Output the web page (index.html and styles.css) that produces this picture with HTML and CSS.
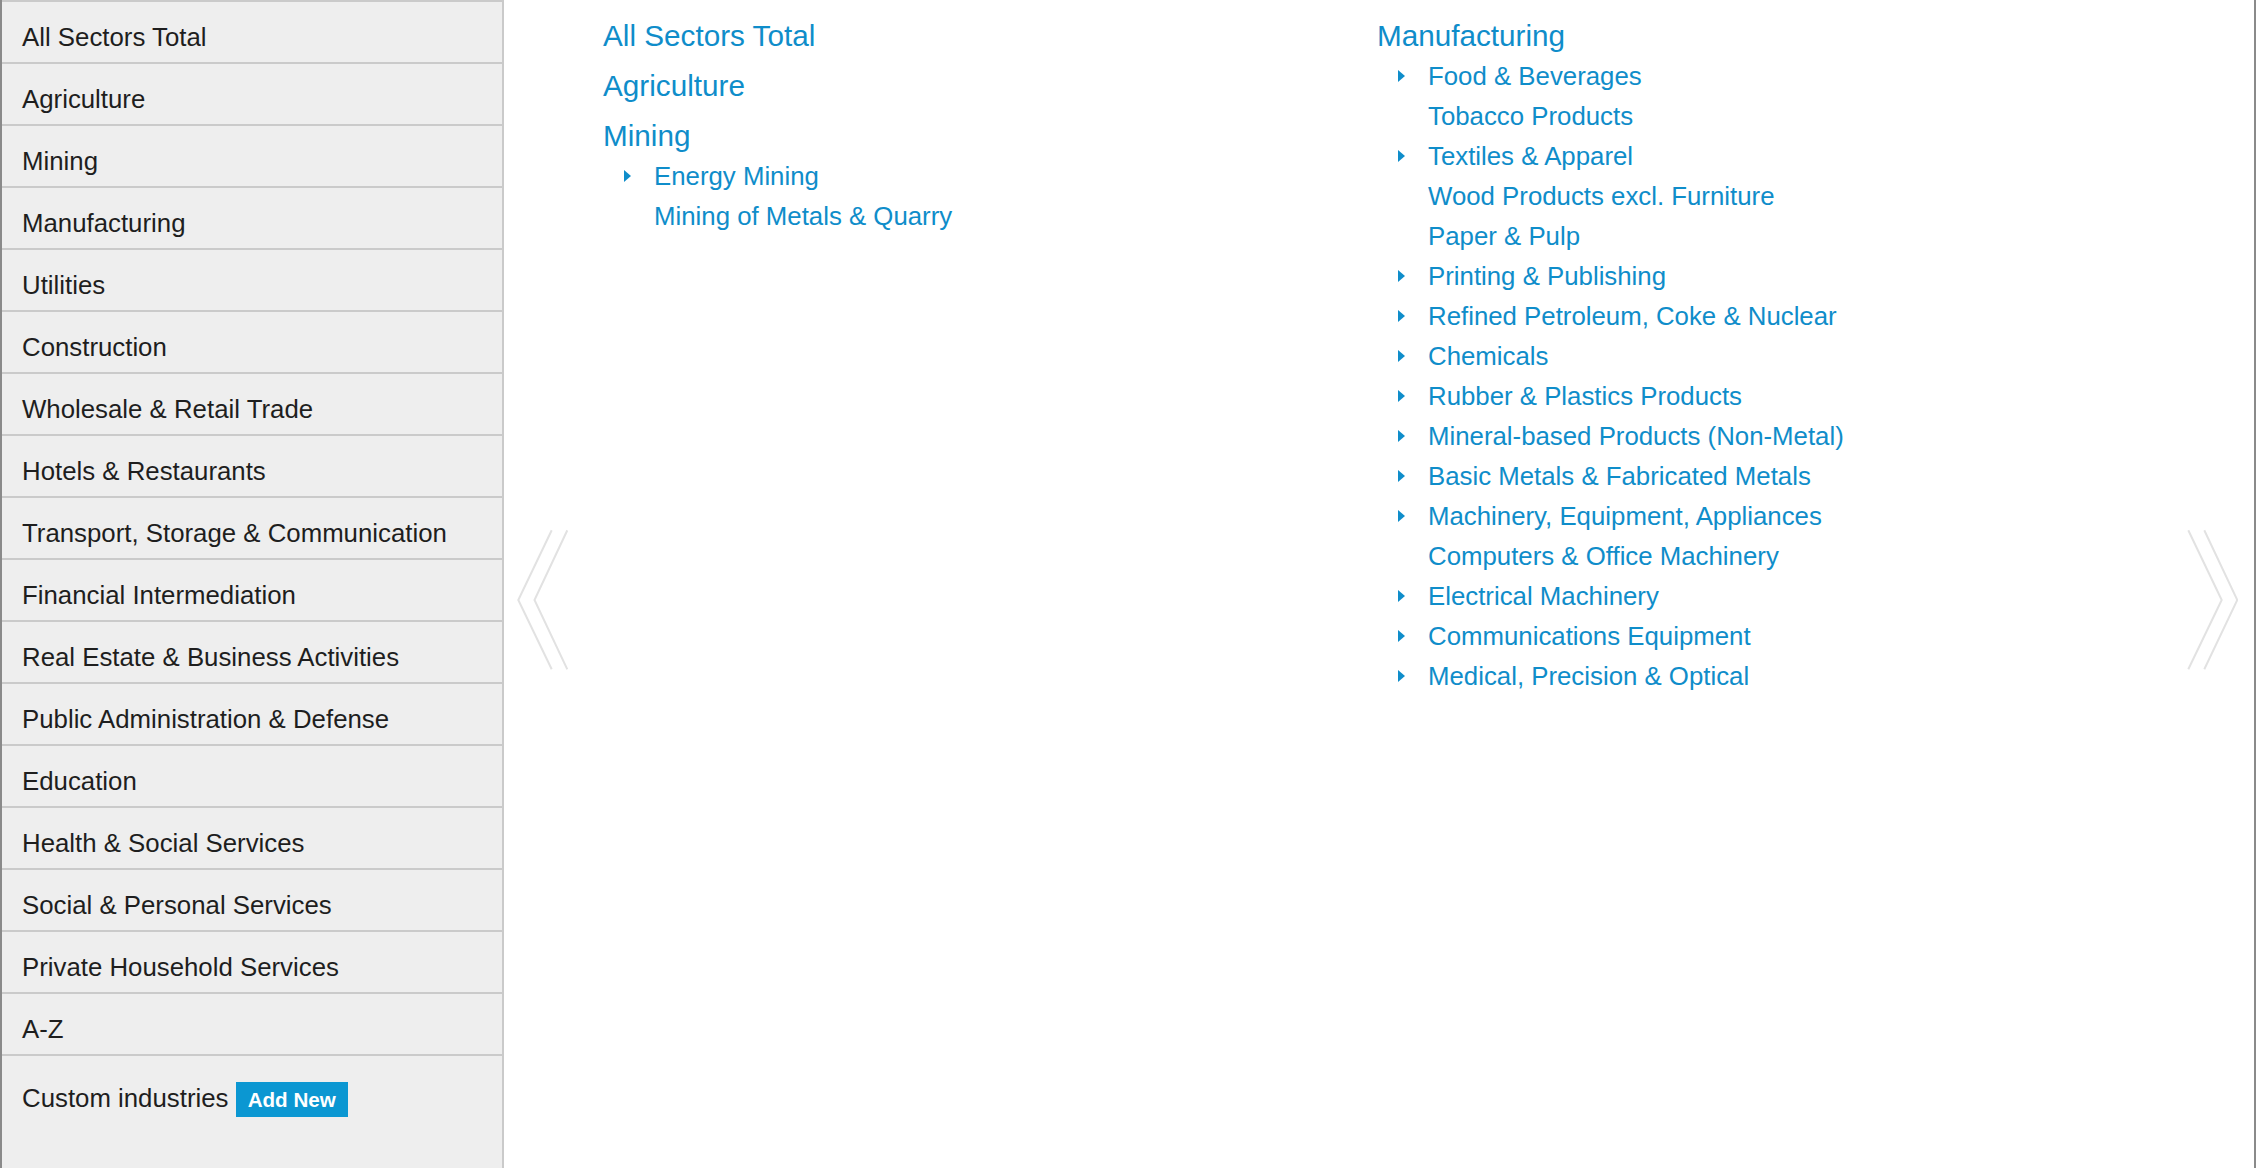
FILE: index.html
```html
<!DOCTYPE html>
<html lang="en">
<head>
<meta charset="utf-8">
<title>Industries</title>
<link rel="stylesheet" href="styles.css">
</head>
<body>
<aside class="sidebar">
  <ul class="side-list">
    <li class="side-item">All Sectors Total</li>
    <li class="side-item">Agriculture</li>
    <li class="side-item">Mining</li>
    <li class="side-item">Manufacturing</li>
    <li class="side-item">Utilities</li>
    <li class="side-item">Construction</li>
    <li class="side-item">Wholesale &amp; Retail Trade</li>
    <li class="side-item">Hotels &amp; Restaurants</li>
    <li class="side-item">Transport, Storage &amp; Communication</li>
    <li class="side-item">Financial Intermediation</li>
    <li class="side-item">Real Estate &amp; Business Activities</li>
    <li class="side-item">Public Administration &amp; Defense</li>
    <li class="side-item">Education</li>
    <li class="side-item">Health &amp; Social Services</li>
    <li class="side-item">Social &amp; Personal Services</li>
    <li class="side-item">Private Household Services</li>
    <li class="side-item">A-Z</li>
    <li class="side-item side-custom">Custom industries <span class="add-btn">Add New</span></li>
  </ul>
</aside>
<main class="main">
  <div class="nav-arrow">
    <svg width="52" height="142" viewBox="0 0 52 142"><polyline points="35.7,1.3 2.3,71 35.7,140.3" fill="none" stroke="#e2e2e2" stroke-width="2"/><polyline points="51.3,1.3 18.5,71 51.3,140.3" fill="none" stroke="#e2e2e2" stroke-width="2"/></svg>
  </div>
  <section class="col col-first">
    <div class="group"><div class="head">All Sectors Total</div></div>
    <div class="group"><div class="head">Agriculture</div></div>
    <div class="group">
      <div class="head">Mining</div>
      <ul class="subs">
        <li class="sub has-kids">Energy Mining</li>
        <li class="sub">Mining of Metals &amp; Quarry</li>
      </ul>
    </div>
  </section>
  <section class="col">
    <div class="group">
      <div class="head">Manufacturing</div>
      <ul class="subs">
        <li class="sub has-kids">Food &amp; Beverages</li>
        <li class="sub">Tobacco Products</li>
        <li class="sub has-kids">Textiles &amp; Apparel</li>
        <li class="sub">Wood Products excl. Furniture</li>
        <li class="sub">Paper &amp; Pulp</li>
        <li class="sub has-kids">Printing &amp; Publishing</li>
        <li class="sub has-kids">Refined Petroleum, Coke &amp; Nuclear</li>
        <li class="sub has-kids">Chemicals</li>
        <li class="sub has-kids">Rubber &amp; Plastics Products</li>
        <li class="sub has-kids">Mineral-based Products (Non-Metal)</li>
        <li class="sub has-kids">Basic Metals &amp; Fabricated Metals</li>
        <li class="sub has-kids">Machinery, Equipment, Appliances</li>
        <li class="sub">Computers &amp; Office Machinery</li>
        <li class="sub has-kids">Electrical Machinery</li>
        <li class="sub has-kids">Communications Equipment</li>
        <li class="sub has-kids">Medical, Precision &amp; Optical</li>
      </ul>
    </div>
  </section>
  <div class="nav-arrow">
    <svg width="52" height="142" viewBox="0 0 52 142"><polyline points="2.3,1.3 35.7,71 2.3,140.3" fill="none" stroke="#e2e2e2" stroke-width="2"/><polyline points="18.3,1.3 51.3,71 18.3,140.3" fill="none" stroke="#e2e2e2" stroke-width="2"/></svg>
  </div>
</main>
</body>
</html>
```

FILE: styles.css
```css
html, body {
  margin: 0;
  padding: 0;
  height: 100%;
}
body {
  box-sizing: border-box;
  display: flex;
  min-height: 100vh;
  border-left: 2px solid #8a8a8a;
  border-right: 2px solid #8a8a8a;
  background: #fff;
  font-family: "Liberation Sans", Arial, Helvetica, sans-serif;
  overflow: hidden;
}
.sidebar {
  box-sizing: border-box;
  width: 502px;
  flex: 0 0 502px;
  background: #eeeeee;
  border-right: 2px solid #cacaca;
}
.side-list {
  list-style: none;
  margin: 0;
  padding: 0;
}
.side-item {
  border-top: 2px solid #cacaca;
  box-sizing: content-box;
  padding: 20px 0 0 20px;
  height: 40px;
  font-size: 25.8px;
  line-height: 30px;
  color: #1e1e1e;
  white-space: nowrap;
}
.side-custom {
  padding-top: 26px;
  height: auto;
}
.add-btn {
  display: inline-block;
  background: #0b97d2;
  color: #fff;
  font-weight: bold;
  font-size: 20.6px;
  line-height: 35px;
  padding: 0 12px;
}
.main {
  flex: 1;
  display: grid;
  grid-template-columns: 52px 1fr 1fr 52px;
  padding: 16px 16px 0 12px;
  align-items: start;
}
.nav-arrow {
  align-self: center;
  margin-top: 16px;
  height: 142px;
}
.nav-arrow svg {
  display: block;
}
.col {
  min-width: 0;
}
.col-first {
  padding-left: 35px;
}
.group + .group {
  margin-top: 10px;
}
.head {
  font-size: 29.7px;
  line-height: 40px;
  color: #0f8dca;
  white-space: nowrap;
}
.subs {
  list-style: none;
  margin: 0;
  padding: 0;
}
.sub {
  display: flex;
  align-items: center;
  font-size: 25.8px;
  line-height: 40px;
  color: #0f8dca;
  white-space: nowrap;
}
.sub::before {
  content: "";
  flex: 0 0 auto;
  width: 0;
  height: 0;
  margin-left: 21px;
  margin-right: 23px;
  border-left: 7px solid transparent;
  border-top: 6px solid transparent;
  border-bottom: 6px solid transparent;
}
.sub.has-kids::before {
  border-left-color: #0f8dca;
}
```
